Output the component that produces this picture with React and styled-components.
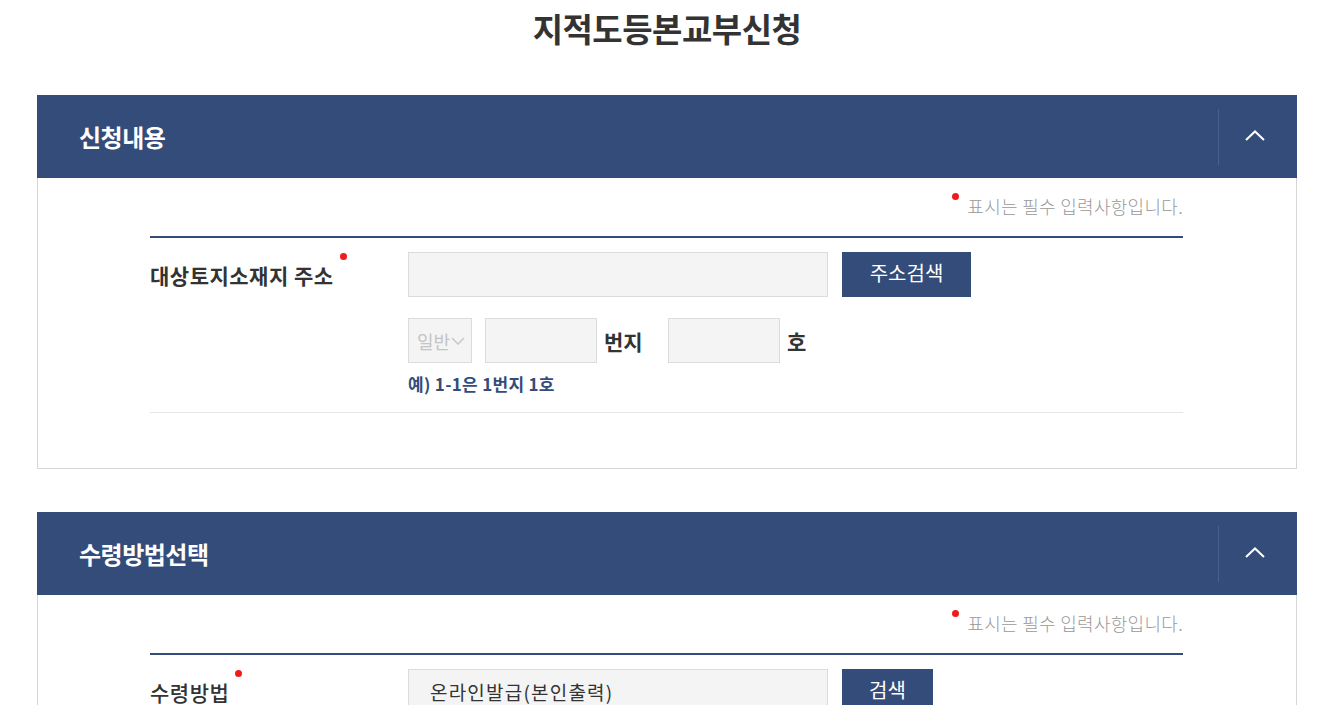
import styled, { createGlobalStyle } from 'styled-components';

const NAVY = '#344c79';

const GlobalStyle = createGlobalStyle`
  html, body {
    margin: 0;
    padding: 0;
    background: #fff;
  }
  body {
    font-family: 'Noto Sans CJK KR', 'Noto Sans', sans-serif;
    color: #333;
  }
`;

function ChevronUp() {
  return (
    <svg width="20" height="11" viewBox="0 0 20 11" fill="none">
      <path d="M1 10 L10 1.5 L19 10" stroke="#fff" strokeWidth="2" />
    </svg>
  );
}

function SelectArrow() {
  return (
    <svg width="14" height="8" viewBox="0 0 14 8" fill="none">
      <path d="M1 1 L7 7 L13 1" stroke="#c8c8c8" strokeWidth="1.5" />
    </svg>
  );
}

function Section({ title, children }) {
  return (
    <SectionBox>
      <SectionHead>
        <SectionTitle>{title}</SectionTitle>
        <ToggleArea>
          <ChevronUp />
        </ToggleArea>
      </SectionHead>
      <SectionBody>
        <RequiredNote>
          <Dot />
          표시는 필수 입력사항입니다.
        </RequiredNote>
        <FormTable>{children}</FormTable>
      </SectionBody>
    </SectionBox>
  );
}

export default function App() {
  return (
    <>
      <GlobalStyle />
      <Page>
        <PageTitle>지적도등본교부신청</PageTitle>

        <Section title="신청내용">
          <FormRow $bordered>
            <Label>
              대상토지소재지 주소
              <Dot $label />
            </Label>
            <Fields>
              <Line>
                <TextBox $width={420} />
                <NavyButton $width={129}>주소검색</NavyButton>
              </Line>
              <Line $top={21}>
                <SelectBox>
                  일반
                  <SelectArrow />
                </SelectBox>
                <TextBox $width={112} />
                <Unit $gap={64}>번지</Unit>
                <TextBox $width={112} />
                <Unit>호</Unit>
              </Line>
              <Example>예) 1-1은 1번지 1호</Example>
            </Fields>
          </FormRow>
        </Section>

        <Section title="수령방법선택">
          <FormRow>
            <Label $light>
              수령방법
              <Dot $label />
            </Label>
            <Fields>
              <Line>
                <TextBox $width={420}>온라인발급(본인출력)</TextBox>
                <NavyButton $width={91}>검색</NavyButton>
              </Line>
            </Fields>
          </FormRow>
        </Section>
      </Page>
    </>
  );
}

const Page = styled.div`
  width: 1260px;
  margin-left: 37px;
`;

const PageTitle = styled.h1`
  margin: 5px 0 44px;
  font-size: 33px;
  line-height: 46px;
  font-weight: 700;
  text-align: center;
  color: #333;
  letter-spacing: -0.5px;
`;

const SectionBox = styled.section`
  margin-bottom: 43px;
`;

const SectionHead = styled.div`
  display: flex;
  align-items: center;
  justify-content: space-between;
  height: 83px;
  background: ${NAVY};
  padding-left: 42px;
  box-sizing: border-box;
`;

const SectionTitle = styled.h2`
  margin: 0;
  font-size: 24px;
  font-weight: 700;
  color: #fff;
  letter-spacing: -0.5px;
`;

const ToggleArea = styled.div`
  display: flex;
  align-items: center;
  justify-content: center;
  width: 79px;
  height: 56px;
  border-left: 1px solid #4a6090;
  padding: 0 6px 3px 0;
  box-sizing: border-box;
`;

const SectionBody = styled.div`
  border: 1px solid #d6d6d6;
  border-top: none;
  padding: 16px 113px 55px 112px;
`;

const RequiredNote = styled.div`
  text-align: right;
  font-size: 18px;
  line-height: 24px;
  letter-spacing: 0.3px;
  color: #999;
  font-weight: 300;
  margin-bottom: 18px;
`;

const Dot = styled.span`
  display: inline-block;
  flex-shrink: 0;
  width: 7px;
  height: 7px;
  border-radius: 50%;
  background: #f01c1c;
  vertical-align: top;
  align-self: flex-start;
  margin: ${(p) => (p.$label ? '1px 0 0 6px' : '-1px 8px 0 0')};
`;

const FormTable = styled.div`
  border-top: 2px solid ${NAVY};
`;

const FormRow = styled.div`
  display: flex;
  padding: 14px 0 17px;
  border-bottom: ${(p) => (p.$bordered ? '1px solid #e6e6e6' : 'none')};
`;

const Label = styled.div`
  width: 258px;
  flex-shrink: 0;
  height: 45px;
  display: flex;
  align-items: center;
  font-size: 21px;
  font-weight: ${(p) => (p.$light ? 500 : 700)};
  color: #333;
  letter-spacing: 0.5px;
`;

const Fields = styled.div`
  display: flex;
  flex-direction: column;
`;

const Line = styled.div`
  display: flex;
  align-items: center;
  margin-top: ${(p) => p.$top || 0}px;
`;

const TextBox = styled.div`
  width: ${(p) => p.$width}px;
  height: 45px;
  box-sizing: border-box;
  background: #f4f4f4;
  border: 1px solid #dcdcdc;
  padding-left: 21px;
  display: flex;
  align-items: center;
  font-size: 19px;
  letter-spacing: 1.2px;
  color: #333;
`;

const NavyButton = styled.button`
  width: ${(p) => p.$width}px;
  height: 45px;
  margin-left: 14px;
  border: none;
  background: ${NAVY};
  color: #fff;
  font-family: inherit;
  font-size: 20px;
  padding: 0 0 4px;
  cursor: pointer;
`;

const SelectBox = styled.div`
  width: 64px;
  height: 45px;
  box-sizing: border-box;
  background: #f4f4f4;
  border: 1px solid #dcdcdc;
  margin-right: 13px;
  display: flex;
  align-items: center;
  gap: 1px;
  padding-left: 8px;
  font-size: 18px;
  color: #c4c4c4;
`;

const Unit = styled.span`
  font-size: 21px;
  font-weight: 700;
  color: #333;
  margin-left: 7px;
  width: ${(p) => (p.$gap ? `${p.$gap}px` : 'auto')};
`;

const Example = styled.div`
  margin-top: 10px;
  font-size: 17px;
  line-height: 22px;
  letter-spacing: 0.3px;
  font-weight: 700;
  color: ${NAVY};
`;
